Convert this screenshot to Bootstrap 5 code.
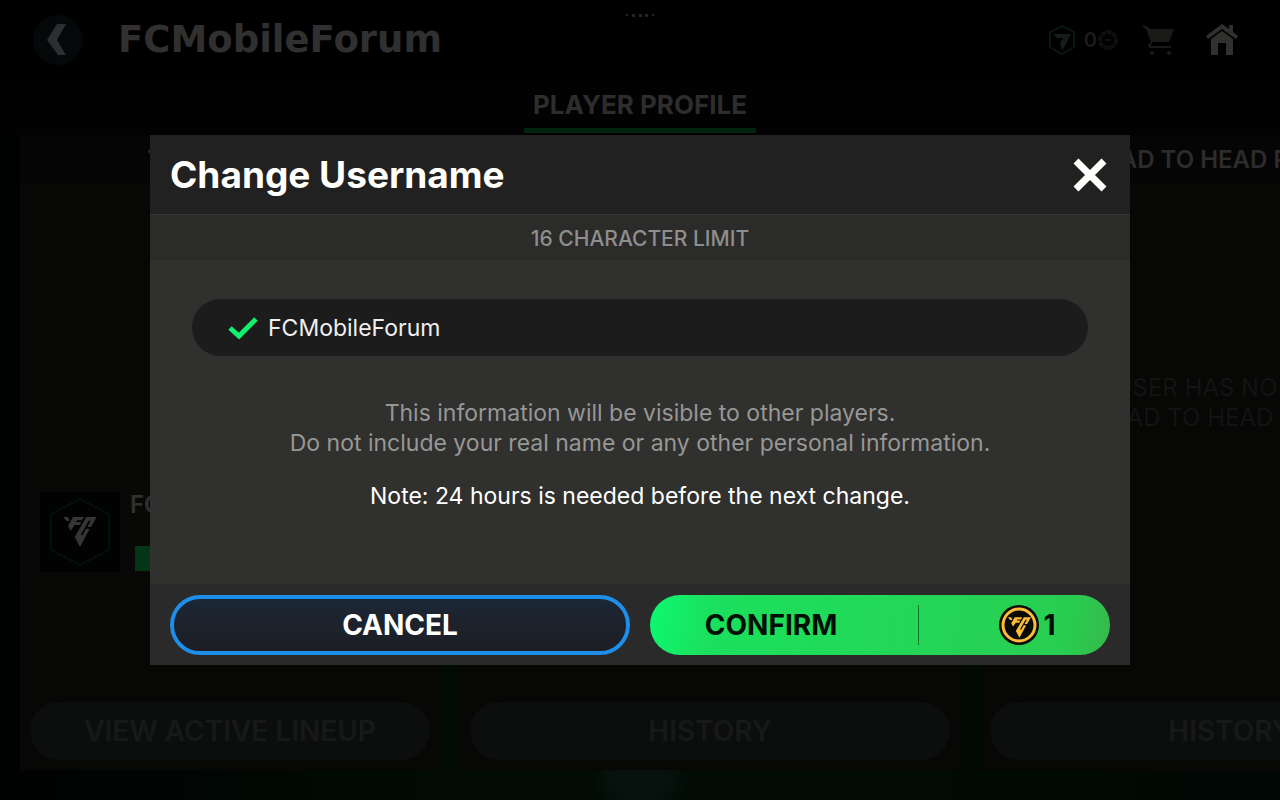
<!DOCTYPE html>
<html lang="en" data-bs-theme="dark">
<head>
<meta charset="utf-8">
<meta name="viewport" content="width=device-width, initial-scale=1">
<title>Change Username</title>
<link href="https://cdn.jsdelivr.net/npm/bootstrap@5.3.0/dist/css/bootstrap.min.css" rel="stylesheet">
<style>
  body { font-family: Inter, "Liberation Sans", sans-serif; background: #010201; color: #2e2e2e; }
  svg { display: block; flex: none; }
  .screen { background: linear-gradient(90deg, #000202, #010b04 35%, #010b04 65%, #010704); }
  .topbar { height: 80px; padding: 0 42px 0 33px; background: #000; }
  .back-btn { width: 50px; height: 50px; background: #040808; color: #2a302f; margin-right: 35px; }
  .profile-name { font-family: "DejaVu Sans", sans-serif; font-size: 37px; line-height: 48px; font-weight: 700; color: #303030; }
  .grip { top: 14px; left: 50%; transform: translateX(-50%); }
  .gem-count { font-size: 20px; color: #1b1b1b; }
  .home-icon { margin-left: 31px; }
  .tabbar { height: 55px; background: #020202; }
  .tab-link { height: 53px; padding: 0 9px; font-size: 26px; line-height: 50px; font-weight: 700; color: #2d2d2d; text-decoration: none; border-bottom: 5px solid #02240f; }
  .panels { gap: 20px; padding: 0 20px 30px; }
  .panel { flex: 0 0 500px; background: #070705; }
  .panel-first { flex-basis: 420px; }
  .panel-title { height: 49px; line-height: 49px; font-size: 24px; font-weight: 600; color: #2c2c2c; background: #050505; margin: 0; }
  .panel-foot { padding: 0 10px 10px; }
  .dim-btn { height: 58px; border-radius: 29px; border: 0; background: #0c0e0d; color: #171918; font-size: 28px; line-height: 34px; font-weight: 600; }
  .empty-note { font-size: 24px; line-height: 30px; color: #131313; margin: auto 0; padding-bottom: 80px; }
  .user-strip { background: #080807; padding: 9px 20px; gap: 10px; margin-bottom: 121px; }
  .avatar { width: 80px; height: 80px; background: #020202; color: #353535; }
  .user-label { font-size: 24px; line-height: 26px; font-weight: 600; color: #303030; }
  .level-bar { width: 180px; height: 25px; background: #033516; margin: 28px 0 0 5px; }
  .glow { height: 30px; left: 0; right: 0; bottom: 0; background: radial-gradient(ellipse 52px 40px at 50% 30%, #07120f 50%, transparent); }

  .name-dialog { --bs-modal-width: 980px; max-width: 980px; }
  .name-dialog .modal-content { background: #30302e; border: 0; border-radius: 0; color: #fff; }
  .name-dialog .modal-header { height: 80px; padding: 0 20px; background: #212121; border-bottom: 1px solid #353535; border-radius: 0; }
  .name-dialog .modal-title { font-size: 37px; line-height: 48px; font-weight: 700; color: #fffffb; }
  .close-btn { width: 40px; height: 40px; color: #fffffb; }
  .limit-bar { height: 45px; line-height: 47px; font-size: 21px; font-weight: 500; color: #8e8e8e; background: #2b2b2a; }
  .name-dialog .modal-body { padding: 39px 42px 73px; font-size: 23px; line-height: 30px; }
  .name-field { height: 57px; border-radius: 29px; background: #1c1c1c; padding: 0 36px; gap: 10px; margin-bottom: 42px; }
  .name-field input { font-size: 23px; line-height: 30px; color: #efefef; background: transparent; outline: 0; }
  .hint { color: #979796; margin-bottom: 23px; }
  .note { color: #fff; }
  .name-dialog .modal-footer { padding: 11px 20px 10px; gap: 20px; border: 0; background: #2a2a2a; border-radius: 0; }
  .name-dialog .modal-footer > * { margin: 0; }
  .act-btn { width: 50%; height: 60px; border-radius: 30px; font-size: 28px; line-height: 34px; font-weight: 700; padding: 0; }
  .cancel-btn { border: 4px solid #1d8feb; background: linear-gradient(#1c2735, #1d1e24); color: #fff; }
  .confirm-btn { border: 0; background: linear-gradient(100deg, #0df870 0, #1be05d 14%, #24d656 60%, #28cd50 90%, #38b84a); color: #000f04; }
  .confirm-text { flex: 1 1 0; padding-right: 26px; }
  .price { width: 192px; height: 40px; border-left: 1px solid #11752e; padding-left: 26px; gap: 4px; }
</style>
</head>
<body>
<svg width="0" height="0" class="position-absolute" aria-hidden="true">
  <symbol id="crest" viewBox="0 0 100 90">
    <path fill="currentColor" d="M0 0H14L19 12H9ZM29 0H62L56 10H41L38 15H54L49 24H34L22 41L14 27ZM69 0H100L83 30H72L82 11H76L52 54H58L68 35H79L50 90L34 60Z"/>
  </symbol>
</svg>

<div class="screen vh-100 overflow-hidden d-flex flex-column position-relative">
  <header class="topbar d-flex align-items-center flex-shrink-0">
    <button type="button" class="back-btn btn rounded-circle border-0 p-0 d-flex align-items-center justify-content-center" aria-label="Back">
      <svg width="24" height="34" viewBox="0 0 24 34"><path fill="currentColor" d="M11 1H20L11 17L20 32H12L1 17Z"/></svg>
    </button>
    <div class="profile-name">FCMobileForum</div>
    <svg class="grip position-absolute" width="28" height="3" fill="#242424" aria-hidden="true"><path d="M0 0h2v2H0zM6 0h3v3H6zM13 0h3v3h-3zM19 0h3v3h-3zM26 0h2v2h-2z"/></svg>
    <div class="ms-auto d-flex align-items-center">
      <svg width="28" height="32" viewBox="0 0 28 32" fill="none" stroke="#061614" stroke-width="2"><path d="M14 2L26 8V23L14 30L2 23V8Z"/><path fill="#151c1b" stroke="none" d="M5 10H23L14 27L12 18L16 14H9Z"/></svg>
      <span class="gem-count fw-semibold ms-2">0</span>
      <svg width="22" height="22" viewBox="0 0 22 22" fill="none" stroke="#0f1111" class="me-4"><circle cx="11" cy="11" r="8" stroke-width="4" stroke-dasharray="5 1"/><path stroke-width="2" d="M8 11H14"/></svg>
      <svg width="32" height="32" viewBox="0 0 32 32" fill="#1a1a19"><path d="M0 1L5 3L7 5H31L26 18H9L8 22H28V24H6L5 21L8 18L3 5L0 3Z"/><circle cx="9" cy="29" r="2"/><circle cx="26" cy="29" r="2"/></svg>
      <svg class="home-icon" width="32" height="32" viewBox="0 0 32 32" fill="#30302e"><path d="M16 0L23 5V1H27V8L32 12L30 15L16 5L2 15L0 12Z"/><path d="M16 7L27 15V31H20V19H12V31H5V15Z"/></svg>
    </div>
  </header>

  <nav class="tabbar d-flex justify-content-center flex-shrink-0">
    <a class="tab-link" href="#profile">PLAYER PROFILE</a>
  </nav>

  <main id="profile" class="panels d-flex flex-grow-1 overflow-hidden position-relative">
    <section class="panel panel-first d-flex flex-column">
      <h2 class="panel-title text-center">TEAM RATING</h2>
      <div class="user-strip d-flex mt-auto">
        <div class="avatar d-flex align-items-center justify-content-center position-relative">
          <svg class="position-absolute" width="62" height="70" viewBox="0 0 62 70" fill="none" stroke="#02100a" stroke-width="2"><path d="M31 2L60 17V53L31 68L2 53V17Z"/></svg>
          <svg width="34" height="30"><use href="#crest"/></svg>
        </div>
        <div>
          <div class="user-label">FCMobileForum</div>
          <div class="level-bar"></div>
        </div>
      </div>
      <div class="panel-foot"><button type="button" class="dim-btn w-100">VIEW ACTIVE LINEUP</button></div>
    </section>
    <section class="panel d-flex flex-column">
      <div class="panel-title"></div>
      <div class="panel-foot mt-auto"><button type="button" class="dim-btn w-100">HISTORY</button></div>
    </section>
    <section class="panel d-flex flex-column">
      <h2 class="panel-title text-center">HEAD TO HEAD RECORD</h2>
      <p class="empty-note text-center">USER HAS NO PAST<br>HEAD TO HEAD GAMES</p>
      <div class="panel-foot"><button type="button" class="dim-btn w-100">HISTORY</button></div>
    </section>
    <div class="glow position-absolute"></div>
  </main>
</div>

<div class="modal d-block" tabindex="-1" role="dialog" aria-labelledby="dialogTitle" aria-modal="true">
  <div class="modal-dialog modal-dialog-centered name-dialog">
    <form class="modal-content">
      <div class="modal-header">
        <h1 class="modal-title" id="dialogTitle">Change Username</h1>
        <button type="button" class="close-btn btn border-0 p-0 d-flex align-items-center justify-content-center" aria-label="Close">
          <svg width="34" height="34" viewBox="0 0 34 34" fill="none" stroke="currentColor" stroke-width="7"><path d="M3 3L31 31M31 3L3 31"/></svg>
        </button>
      </div>
      <label class="limit-bar text-center" for="username">16 CHARACTER LIMIT</label>
      <div class="modal-body text-center">
        <div class="name-field d-flex align-items-center">
          <svg width="30" height="24" viewBox="0 0 30 24" fill="none" stroke="#12ef6c" stroke-width="5"><path d="M2 12L11 20L28 3"/></svg>
          <input id="username" type="text" class="border-0 p-0 flex-grow-1" maxlength="16" value="FCMobileForum">
        </div>
        <p class="hint">This information will be visible to other players.<br>Do not include your real name or any other personal information.</p>
        <p class="note mb-0">Note: 24 hours is needed before the next change.</p>
      </div>
      <div class="modal-footer flex-nowrap">
        <button type="button" class="act-btn cancel-btn btn">CANCEL</button>
        <button type="submit" class="act-btn confirm-btn btn d-flex align-items-center">
          <span class="confirm-text">CONFIRM</span>
          <span class="price d-flex align-items-center justify-content-center">
            <svg width="40" height="40" viewBox="0 0 40 40"><circle cx="20" cy="20" r="20" fill="#0a0a06"/><circle cx="20" cy="20" r="16" fill="none" stroke="#fcbc3a" stroke-width="3"/><svg x="9" y="12" width="23" height="21" color="#fcbc3a"><use href="#crest"/></svg></svg>
            <span>1</span>
          </span>
        </button>
      </div>
    </form>
  </div>
</div>
<script src="https://cdn.jsdelivr.net/npm/bootstrap@5.3.0/dist/js/bootstrap.bundle.min.js"></script>
</body>
</html>
